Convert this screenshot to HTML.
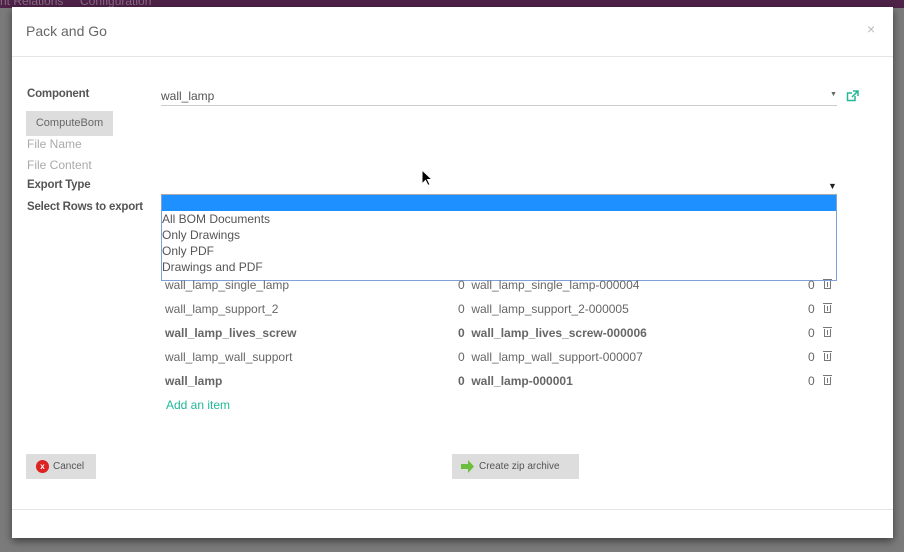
<!DOCTYPE html>
<html><head><style>
*{margin:0;padding:0;box-sizing:border-box}
body{width:904px;height:552px;overflow:hidden;background:#7b7b7b;font-family:"Liberation Sans",sans-serif;position:relative}
.top{position:absolute;left:0;top:0;width:904px;height:8px;background:#4f2248}
.top span{position:absolute;top:-6px;color:#8a6a85;font-size:12px}
.m{position:absolute;left:12px;top:7px;width:881px;height:531px;background:#fff;box-shadow:0 3px 8px rgba(0,0,0,.5)}
.a{position:absolute;white-space:nowrap}
.lab{font-size:11.5px;font-weight:bold;color:#555;letter-spacing:-0.2px}
.muted{font-size:12px;color:#aaa}
.row{font-size:12px;color:#666}
.b{font-weight:bold}
.trash{position:absolute;width:7px;height:8px;border:1px solid #777;border-top:none}
.trash:before{content:"";position:absolute;left:-2px;top:-2px;width:9px;height:1px;background:#777}
.trash:after{content:"";position:absolute;left:2px;top:1px;width:1px;height:5px;background:#777}
</style></head><body>
<div class="top"><span style="left:0">nt Relations</span><span style="left:80px">Configuration</span></div>
<div class="m">
<div class="a" style="left:14px;top:16px;font-size:14px;color:#666">Pack and Go</div>
<div class="a" style="left:855px;top:14px;font-size:14px;color:#bbb">×</div>
<div style="position:absolute;left:0;top:49px;width:881px;height:1px;background:#e5e5e5"></div>
<div class="a lab" style="left:15px;top:81px">Component</div>
<div class="a" style="left:149px;top:82px;font-size:12px;color:#555">wall_lamp</div>
<div style="position:absolute;left:149px;top:98px;width:676px;height:1px;background:#ccc"></div>
<div class="a" style="left:818px;top:84px;font-size:7px;color:#666">▼</div>
<svg class="a" style="left:834px;top:83px" width="13" height="12" viewBox="0 0 13 12"><path d="M9 6v4.5H1.5V3H6" fill="none" stroke="#21b799" stroke-width="1.5"/><path d="M7 1h5v5M12 1L6 7" fill="none" stroke="#21b799" stroke-width="1.5"/></svg>
<div class="a" style="left:14px;top:104px;width:87px;height:25px;background:#ddd;font-size:11px;color:#666;text-align:center;line-height:25px">ComputeBom</div>
<div class="a muted" style="left:15px;top:130px">File Name</div>
<div class="a muted" style="left:15px;top:151px">File Content</div>
<div class="a lab" style="left:15px;top:172px">Export Type</div>
<div class="a lab" style="left:15px;top:194px">Select Rows to export</div>
<div class="a" style="left:816px;top:174px;font-size:9px;color:#222">▼</div>
<div style="position:absolute;left:149px;top:187px;width:676px;height:87px;border:1px solid #7fa0d8;border-top-color:#aaa;background:#fff">
<div style="height:16px;background:#1e90ff"></div>
<div style="font-size:12px;color:#555;line-height:16px">All BOM Documents<br>Only Drawings<br>Only PDF<br>Drawings and PDF</div>
</div>
<div class="a row" style="left:153px;top:271px">wall_lamp_single_lamp</div>
<div class="a row" style="left:446px;top:271px">0 &nbsp;wall_lamp_single_lamp-000004</div>
<div class="a row" style="left:796px;top:271px">0</div><div class="trash" style="left:812px;top:274px"></div>
<div class="a row" style="left:153px;top:295px">wall_lamp_support_2</div>
<div class="a row" style="left:446px;top:295px">0 &nbsp;wall_lamp_support_2-000005</div>
<div class="a row" style="left:796px;top:295px">0</div><div class="trash" style="left:812px;top:298px"></div>
<div class="a row b" style="left:153px;top:319px">wall_lamp_lives_screw</div>
<div class="a row b" style="left:446px;top:319px">0 &nbsp;wall_lamp_lives_screw-000006</div>
<div class="a row" style="left:796px;top:319px">0</div><div class="trash" style="left:812px;top:322px"></div>
<div class="a row" style="left:153px;top:343px">wall_lamp_wall_support</div>
<div class="a row" style="left:446px;top:343px">0 &nbsp;wall_lamp_wall_support-000007</div>
<div class="a row" style="left:796px;top:343px">0</div><div class="trash" style="left:812px;top:346px"></div>
<div class="a row b" style="left:153px;top:367px">wall_lamp</div>
<div class="a row b" style="left:446px;top:367px">0 &nbsp;wall_lamp-000001</div>
<div class="a row" style="left:796px;top:367px">0</div><div class="trash" style="left:812px;top:370px"></div>
<div class="a" style="left:154px;top:391px;font-size:12px;color:#21b799">Add an item</div>
<div class="a" style="left:14px;top:447px;width:70px;height:25px;background:#ddd;font-size:10px;color:#555;line-height:25px;padding-left:27px">Cancel
<span style="position:absolute;left:10px;top:6px;width:13px;height:13px;border-radius:50%;background:#d22;color:#fff;font-size:8px;line-height:13px;text-align:center;font-weight:bold">x</span></div>
<div class="a" style="left:440px;top:447px;width:127px;height:25px;background:#ddd;font-size:10px;color:#555;line-height:25px;padding-left:27px">Create zip archive
<svg style="position:absolute;left:8px;top:6px" width="15" height="13" viewBox="0 0 15 13"><path d="M1 4h7V0l6 6.5-6 6.5V9H1z" fill="#6cbf3c"/></svg></div>
<div style="position:absolute;left:0;top:502px;width:881px;height:1px;background:#e5e5e5"></div>
</div>
<svg class="a" style="left:421px;top:169px" width="12" height="18" viewBox="0 0 12 18"><path d="M1 1v14l3.5-3.5 2.5 5 2-1-2.5-5H11z" fill="#000" stroke="#fff" stroke-width="1"/></svg>
</body></html>
